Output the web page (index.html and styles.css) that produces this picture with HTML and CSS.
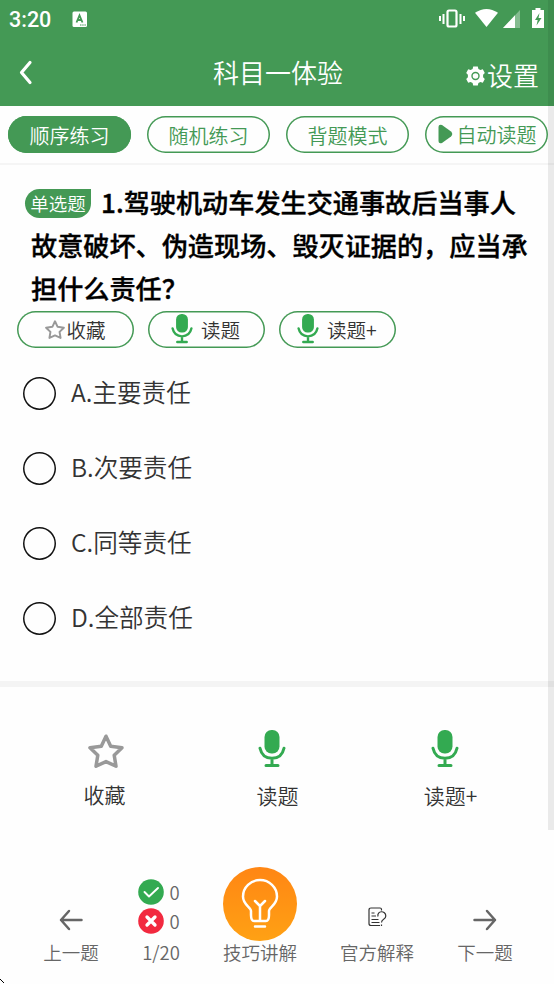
FILE: index.html
```html
<!DOCTYPE html>
<html lang="zh-CN">
<head>
<meta charset="utf-8">
<title>科目一体验</title>
<link rel="stylesheet" href="styles.css">
</head>
<body>
<svg class="defs" width="0" height="0">
  <symbol id="mic" viewBox="0 0 28 38">
    <rect x="6.5" y="0" width="15" height="23.5" rx="7" fill="#33aa51"/>
    <path d="M2 18.2C3.5 25 8 28.3 14 28.3S24.500 25 26 18.200M14 28.500V35M8 35.500h12" fill="none" stroke="#33aa51" stroke-width="3" stroke-linecap="round"/>
  </symbol>
  <symbol id="star" viewBox="0 0 36 34">
    <path d="M18 2.200L22.700 12.200L34 13.800L26.200 21.300L28 32.200L18 27.600L8 32.200L9.800 21.300L2 13.800L13.300 12.200Z" fill="none" stroke="#999" stroke-width="3.500" stroke-linejoin="round"/>
  </symbol>
</svg>
<main class="screen">
  <header class="top">
    <div class="status">
      <span class="clock">3:20</span>
      <svg class="ime" width="16" height="17" viewBox="0 0 16 17"><rect x=".5" y=".5" width="14.500" height="15.500" rx="1.500" fill="#fff"/><path d="M4.500 11.500L7.500 4.300L10.500 11.500M5.500 9h4" fill="none" stroke="#449955" stroke-width="1.800"/><path d="M8 14h6" stroke="#449955" stroke-dasharray="1.500 .7"/></svg>
      <svg class="sys" width="106" height="20" viewBox="0 0 106 20">
        <rect x="8.500" y="2.500" width="9" height="16" rx="1.500" fill="none" stroke="#fff" stroke-width="2.200"/>
        <path d="M1 8v5M4.500 6v10M21.500 6v10M25 8v5" stroke="#fff" stroke-width="2"/>
        <path d="M36 4.800Q47.500-2.800 59 4.800L47.500 19Z" fill="#fff"/>
        <path d="M64 20L81 2V20Z" fill="#fff" opacity=".35"/><path d="M64 20L76 7.300V20Z" fill="#fff"/>
        <path d="M96.500 0h5v2h3.500v18H93V2h3.500Z" fill="#fff"/><path d="M100.500 5L96 12h2.700L97.500 17.500L102.500 10H99.500Z" fill="#449955"/>
      </svg>
    </div>
    <div class="nav">
      <svg class="back" width="14" height="26" viewBox="0 0 14 26"><path d="M11 2.500L2.500 12.500L11 22.500" fill="none" stroke="#fff" stroke-width="3.200" stroke-linecap="round" stroke-linejoin="round"/></svg>
      <h1>科目一体验</h1>
      <div class="settings">
        <svg width="19" height="20" viewBox="0 0 19 20"><path d="M7.200.5h4.600l.6 2.500 2 1.100 2.400-.8 2 3.600-1.700 1.900v2.400l1.700 1.900-2 3.600-2.400-.8-2 1.100-.6 2.500H7.200l-.6-2.500-2-1.100-2.400.8-2-3.600 1.700-1.900V8.800L.2 6.900l2-3.600 2.400.8 2-1.100Z" fill="#fff"/><circle cx="9.500" cy="10" r="3.500" fill="none" stroke="#449955" stroke-width="1.400"/></svg>
        <span>设置</span>
      </div>
    </div>
  </header>
  <nav class="tabs">
    <div class="tab active">顺序练习</div><div class="tab">随机练习</div><div class="tab">背题模式</div>
    <div class="tab play"><svg width="15" height="20" viewBox="0 0 15 20"><path d="M.5 3Q.5 0 4 1L13 7.500Q15.500 10 13 12.500L4 19Q.5 20 .5 17Z" fill="#449955"/></svg><span>自动读题</span></div>
  </nav>
  <section class="question">
    <div class="stem"><span class="badge">单选题</span>1.驾驶机动车发生交通事故后当事人<br>故意破坏、伪造现场、毁灭证据的，应当承<br>担什么责任？</div>
    <div class="pills">
      <div class="pill"><svg class="sstar"><use href="#star"/></svg>收藏</div>
      <div class="pill voice"><svg class="smic"><use href="#mic"/></svg>读题</div>
      <div class="pill voice plus"><svg class="smic"><use href="#mic"/></svg>读题+</div>
    </div>
    <ul class="options">
      <li><i></i><span>A.主要责任</span></li><li><i></i><span>B.次要责任</span></li><li><i></i><span>C.同等责任</span></li><li><i></i><span>D.全部责任</span></li>
    </ul>
  </section>
  <section class="tools">
    <div class="tool"><svg class="bstar"><use href="#star"/></svg><span>收藏</span></div>
    <div class="tool"><svg class="bmic"><use href="#mic"/></svg><span>读题</span></div>
    <div class="tool"><svg class="bmic"><use href="#mic"/></svg><span>读题+</span></div>
  </section>
  <footer>
    <div class="item prev"><svg width="24" height="22" viewBox="0 0 24 22"><path d="M10 2L2 11L10 20M2 11H22.500" fill="none" stroke="#666" stroke-width="2.500" stroke-linecap="round" stroke-linejoin="round"/></svg><span>上一题</span></div>
    <div class="item score">
      <div class="count"><svg width="26" height="26" viewBox="0 0 26 26"><circle cx="13" cy="13" r="12.800" fill="#33aa51"/><path d="M6.500 13L11 17.500L20 9" fill="none" stroke="#fff" stroke-width="1.900" stroke-linecap="round" stroke-linejoin="round"/></svg>0</div>
      <div class="count"><svg width="26" height="26" viewBox="0 0 26 26"><circle cx="13" cy="13" r="12.800" fill="#f2293f"/><path d="M9 9L17 17M17 9L9 17" stroke="#fff" stroke-width="3.300" stroke-linecap="round"/></svg>0</div>
      <span>1/20</span>
    </div>
    <div class="item tips"><div class="bulb"><svg width="74" height="74" viewBox="0 0 74 74"><path d="M28 50V46C28 42 20 40 20 31.500A17 16.500 0 0 1 54 31.500C54 40 46 42 46 46V50Q46 56 43 56H31Q28 56 28 50ZM37 56V41M32 36L37 41L42 36M32 61.500h10" fill="none" stroke="#fff" stroke-width="2.500" stroke-linecap="round" stroke-linejoin="round"/></svg></div><span>技巧讲解</span></div>
    <div class="item official"><svg width="19" height="20" viewBox="0 0 19 20"><path d="M13.500 3.500V2.500Q13.500 1 12 1H3Q1 1 1 3V16.500Q1 18.500 3 18.500H12M3.500 6H6.500M3.500 9H8M3.500 12.500H10.500M3.500 15.500H11.500M10 9.500C8.500 3.500 17.800 3 17.800 9C17.800 13 13.500 11.500 13.500 15.500M13.500 17.500V19" fill="none" stroke="#333" stroke-width="1.200"/></svg><span>官方解释</span></div>
    <div class="item next"><svg width="24" height="22" viewBox="0 0 24 22"><path d="M14 2L22 11L14 20M22 11H1.500" fill="none" stroke="#666" stroke-width="2.500" stroke-linecap="round" stroke-linejoin="round"/></svg><span>下一题</span></div>
  </footer>
  <div class="scrollbar"></div>
  <svg class="corner" width="5" height="5" viewBox="0 0 5 5"><path d="M0 .5h1M1 1.500h1M2 2.500h1M3 3.500h1" stroke="#000"/></svg>
</main>
</body>
</html>
```

FILE: styles.css
```css
* { box-sizing: border-box; }
body { margin: 0; font-family: "Noto Sans CJK SC", sans-serif; font-weight: 350; color: #333; background: #fefefe; }
.defs { position: absolute; }
.screen { position: relative; width: 554px; height: 984px; overflow: hidden; }
svg { display: block; flex: none; }
.top { height: 106px; background: #449955; color: #fff; }
.status { height: 38px; display: flex; align-items: center; padding: 0 9px; }
.clock { font: 500 21.500px/38px Roboto, sans-serif; width: 63px; padding-top: 1px; }
.sys { margin-left: auto; margin-top: -2px; }
.nav { display: grid; grid-template-columns: 1fr 130px 1fr; height: 68px; padding: 0 15px 0 19px; align-items: center; }
.back { margin-top: 2px; }
.nav h1 { margin: 0 -2px 0 -1px; font-size: 26px; line-height: 40px; font-weight: 350; white-space: nowrap; }
.settings { display: flex; justify-content: flex-end; align-items: center; gap: 2px; font-size: 26px; line-height: 40px; padding-top: 5px; }
.settings svg { margin-top: 2px; }
.tabs { height: 59px; border-bottom: 2px solid #f5f5f5; padding: 10px 7px 0 8px; display: flex; gap: 16px; }
.tab { width: 123px; height: 37px; flex: none; box-shadow: inset 0 0 0 1.500px #449955; border-radius: 19px; font-size: 20px; line-height: 39px; text-align: center; color: #449955; }
.tab.active { background: #449955; color: #fff; }
.play { display: flex; align-items: center; justify-content: center; gap: 4px; }
.play svg { margin: -1px 0 0 1px; }
.question { height: 516px; padding-top: 16px; }
.stem { margin: 0 20px 0 31px; height: 129.500px; font-size: 26.150px; line-height: 43px; font-weight: 500; -webkit-text-stroke: .35px #000; color: #000; white-space: nowrap; }
.badge { display: inline-block; width: 66px; height: 29px; margin: 0 10px 0 -6px; vertical-align: 2px; border-radius: 15px 0 15px 15px; background: #449955; color: #fff; -webkit-text-stroke: 0; font-size: 18.500px; line-height: 29px; font-weight: 350; text-align: center; }
.pills { display: flex; gap: 14px; padding-left: 17px; }
.pill { width: 117px; height: 37px; box-shadow: inset 0 0 0 1.500px #449955; border-radius: 19px; display: flex; justify-content: center; align-items: center; font-size: 19.500px; line-height: 35px; }
.voice { justify-content: flex-start; padding-left: 22px; gap: 7px; }
.plus { padding-left: 17px; }
.sstar { width: 20px; height: 19px; margin-right: 1px; }
.smic { width: 24px; height: 30px; }
.options { list-style: none; margin: 8px 0 0; padding: 0 0 0 23px; }
.options li { height: 75px; display: flex; align-items: center; gap: 15px; font-size: 24.600px; }
.options span { margin-top: -4px; }
.options i { width: 33px; height: 33px; box-shadow: inset 0 0 0 1.500px #111; border-radius: 50%; }
.tools { height: 149px; border-top: 6px solid #f4f4f4; display: grid; grid-template-columns: 173px 173px 173px; padding: 43px 0 0 18px; }
.tool { display: flex; flex-direction: column; align-items: center; font-size: 21px; line-height: 30px; }
.tool span { margin-top: 12px; }
.bmic { width: 28px; height: 38px; margin-right: 11px; }
.bstar { width: 36px; height: 34px; margin: 4px 0 -1px 3px; }
footer { height: 154px; display: flex; padding: 0 36px 17px 38px; font-size: 18.500px; line-height: 30px; color: #666; }
.item { display: flex; flex-direction: column; justify-content: flex-end; align-items: center; flex: none; }
.prev { width: 66px; }
.score { width: 114px; }
.tips { width: 84px; }
.official { width: 150px; }
.next { width: 66px; }
.prev svg, .next svg { margin-bottom: 6px; }
.official svg { margin-bottom: 10px; }
.count { display: flex; align-items: center; gap: 6px; height: 29px; width: 47px; line-height: 26px; }
.count:nth-child(2) { margin-bottom: 2px; }
.bulb { width: 74px; height: 74px; border-radius: 50%; background: linear-gradient(#ff8614, #ffa114); margin-bottom: -4px; }
.bulb svg { margin-top: -2px; }
.scrollbar { position: absolute; right: 0; top: 0; width: 6px; height: 830px; background: rgba(0, 0, 0, .08); }
.corner { position: absolute; left: 0; bottom: 0; }
```
